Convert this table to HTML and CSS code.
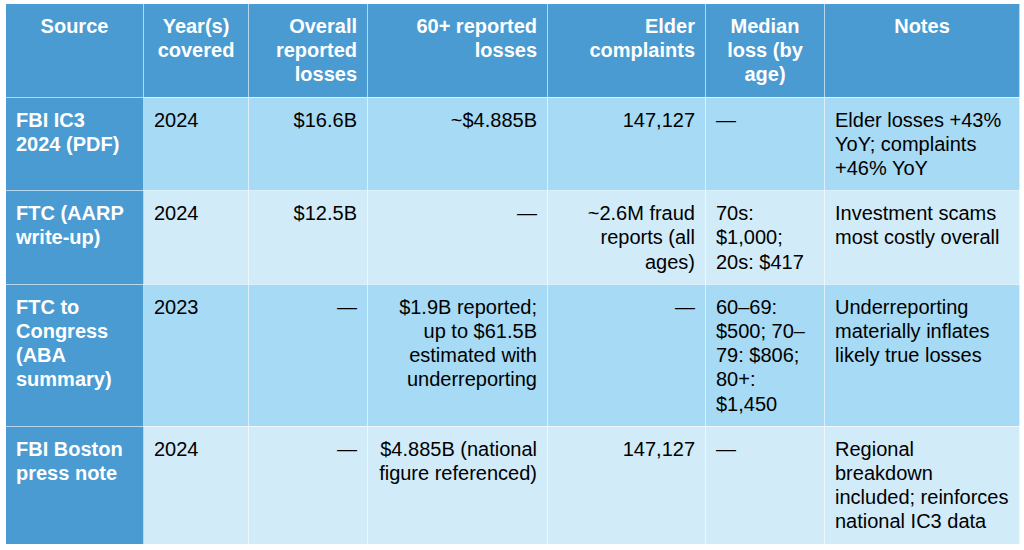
FILE: index.html
```html
<!DOCTYPE html>
<html lang="en">
<head>
<meta charset="utf-8">
<title>Elder fraud sources</title>
<link rel="stylesheet" href="styles.css">
</head>
<body>
<table class="data">
  <colgroup>
    <col class="c-src">
    <col class="c-year">
    <col class="c-all">
    <col class="c-60">
    <col class="c-elder">
    <col class="c-med">
    <col class="c-notes">
  </colgroup>
  <thead>
    <tr>
      <th class="ctr">Source</th>
      <th class="ctr">Year(s) covered</th>
      <th class="rt">Overall reported losses</th>
      <th class="rt">60+ reported losses</th>
      <th class="rt">Elder complaints</th>
      <th class="ctr">Median loss (by age)</th>
      <th class="ctr">Notes</th>
    </tr>
  </thead>
  <tbody>
    <tr class="odd">
      <th class="src">FBI IC3 2024 (PDF)</th>
      <td>2024</td>
      <td class="rt">$16.6B</td>
      <td class="rt">~$4.885B</td>
      <td class="rt">147,127</td>
      <td>—</td>
      <td>Elder losses +43% YoY; complaints +46% YoY</td>
    </tr>
    <tr class="even">
      <th class="src">FTC (AARP write-up)</th>
      <td>2024</td>
      <td class="rt">$12.5B</td>
      <td class="rt">—</td>
      <td class="rt">~2.6M fraud reports (all ages)</td>
      <td>70s: $1,000; 20s: $417</td>
      <td>Investment scams most costly overall</td>
    </tr>
    <tr class="odd">
      <th class="src">FTC to Congress (ABA summary)</th>
      <td>2023</td>
      <td class="rt">—</td>
      <td class="rt">$1.9B reported; up to $61.5B estimated with underreporting</td>
      <td class="rt">—</td>
      <td>60–69: $500; 70–79: $806; 80+: $1,450</td>
      <td>Underreporting materially inflates likely true losses</td>
    </tr>
    <tr class="even">
      <th class="src">FBI Boston press note</th>
      <td>2024</td>
      <td class="rt">—</td>
      <td class="rt">$4.885B (national figure referenced)</td>
      <td class="rt">147,127</td>
      <td>—</td>
      <td>Regional breakdown included; reinforces national IC3 data</td>
    </tr>
  </tbody>
</table>
</body>
</html>
```
FILE: styles.css
```css
html, body {
  margin: 0;
  padding: 0;
  background: #ffffff;
}

body {
  font-family: "Liberation Sans", Arial, Helvetica, sans-serif;
  font-size: 20px;
  line-height: 24.2px;
  color: #000;
}

.data {
  margin: 3px 0 0 5px;
  width: 1014px;
  table-layout: fixed;
  border-collapse: collapse;
}

.c-src { width: 138px; }
.c-year { width: 105px; }
.c-all { width: 119px; }
.c-60 { width: 180px; }
.c-elder { width: 158px; }
.c-med { width: 119px; }
.c-notes { width: 195px; }

.data th,
.data td {
  padding: 10px;
  vertical-align: top;
  text-align: left;
  border: 1px solid rgba(255, 255, 255, 0.6);
}

.data thead th {
  background: #4a9bd1;
  color: #fff;
  font-weight: bold;
}

.data th.src {
  background: #4a9bd1;
  color: #fff;
  font-weight: bold;
}

.data .odd td { background: #a7daf4; }
.data .even td { background: #d1ebf8; }

.data .rt { text-align: right; }
.data .ctr { text-align: center; }
```
